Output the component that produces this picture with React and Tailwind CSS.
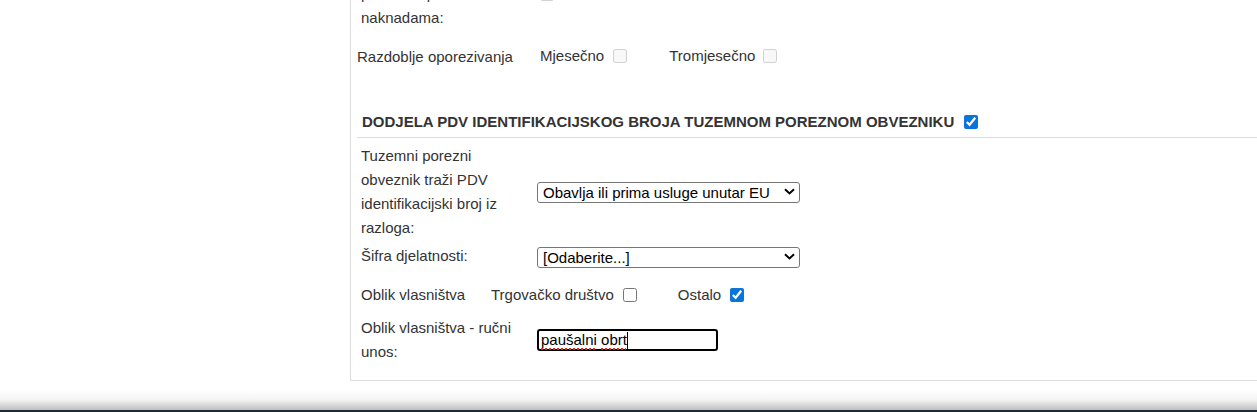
import React from "react";

function Chevron() {
  return (
    <svg
      className="pointer-events-none absolute right-[5px] top-[7px]"
      width="11"
      height="7"
      viewBox="0 0 11 7"
      fill="none"
    >
      <path d="M1 1.2 L5.5 5.5 L10 1.2" stroke="#000" strokeWidth="1.9" />
    </svg>
  );
}

function Select({ value }) {
  return (
    <div className="relative w-[263px] h-[21px]">
      <select
        defaultValue={value}
        className="appearance-none w-full h-full border border-[#767676] rounded-[3px] bg-white pl-[5px] pr-[20px] text-black text-[15px] leading-[19px]"
      >
        <option value={value}>{value}</option>
      </select>
      <Chevron />
    </div>
  );
}

function Box({ checked = false, disabled = false, className = "" }) {
  return (
    <input
      type="checkbox"
      checked={checked}
      disabled={disabled}
      readOnly
      className={`w-[14px] h-[14px] accent-[#0b74d9] ${className}`}
    />
  );
}

export default function App() {
  return (
    <div className="w-[1257px] h-[412px] overflow-hidden bg-white flex flex-col font-['Liberation_Sans',Arial,sans-serif] text-[15px] leading-[24px] text-[#333]">
      <div className="ml-[350px] w-[960px] border-l border-b border-[#ddd] pb-[16px]">
        {/* partially visible row */}
        <div className="-mt-[42px] flex items-center">
          <div className="w-[186px] pl-[10px] pr-[14px]">
            Porezni obveznik plaća
            <br />
            porezima po
            <br />
            naknadama:
          </div>
          <Box disabled className="ml-[3px]" />
        </div>

        {/* Razdoblje oporezivanja */}
        <div className="mt-[15px] flex items-center pl-[6px]">
          <span className="w-[183px]">Razdoblje oporezivanja</span>
          <span className="-mt-[3px]">Mjesečno</span>
          <Box disabled className="ml-[9px] -mt-[2px]" />
          <span className="ml-[42px] -mt-[3px]">Tromjesečno</span>
          <Box disabled className="ml-[8px] -mt-[2px]" />
        </div>

        {/* Heading */}
        <div className="mt-[41px] ml-[6px] pl-[5px] pb-[3px] border-b border-[#ddd] flex items-center">
          <h2 className="font-bold text-[15px] leading-[24px]">
            DODJELA PDV IDENTIFIKACIJSKOG BROJA TUZEMNOM POREZNOM OBVEZNIKU
          </h2>
          <Box checked className="ml-[10px]" />
        </div>

        <div className="pt-[6px]">
          <div className="flex items-center">
            <div className="w-[186px] pl-[10px] pr-[14px]">
              Tuzemni porezni obveznik traži PDV identifikacijski broj iz razloga:
            </div>
            <div className="-mt-[2px]">
              <Select value="Obavlja ili prima usluge unutar EU" />
            </div>
          </div>

          <div className="mt-[4px] flex items-center">
            <div className="w-[186px] pl-[10px] pr-[14px]">Šifra djelatnosti:</div>
            <Select value="[Odaberite...]" />
          </div>

          <div className="mt-[15px] flex items-center pl-[10px]">
            <span className="w-[130px]">Oblik vlasništva</span>
            <span>Trgovačko društvo</span>
            <Box className="ml-[9px]" />
            <span className="ml-[41px]">Ostalo</span>
            <Box checked className="ml-[9px]" />
          </div>

          <div className="mt-[9px] flex items-center">
            <div className="w-[186px] pl-[10px] pr-[14px]">
              Oblik vlasništva - ručni unos:
            </div>
            <div className="w-[181px] h-[22px] border-2 border-black rounded-[3px] pl-[2px] flex items-center text-black leading-[18px]">
              <span className="underline decoration-dotted decoration-[#e0261b] decoration-[2px] underline-offset-[3px]">
                paušalni
              </span>
              <span>&nbsp;</span>
              <span className="underline decoration-dotted decoration-[#e0261b] decoration-[2px] underline-offset-[3px]">
                obrt
              </span>
              <span className="w-px h-[17px] bg-black" />
            </div>
          </div>
        </div>
      </div>
      <div className="flex-1" />
      <div className="h-[20px] bg-gradient-to-b from-white via-[#f3f3f3] to-[#bfbfbf]" />
      <div className="h-[2px] bg-[#1d2b35]" />
    </div>
  );
}
